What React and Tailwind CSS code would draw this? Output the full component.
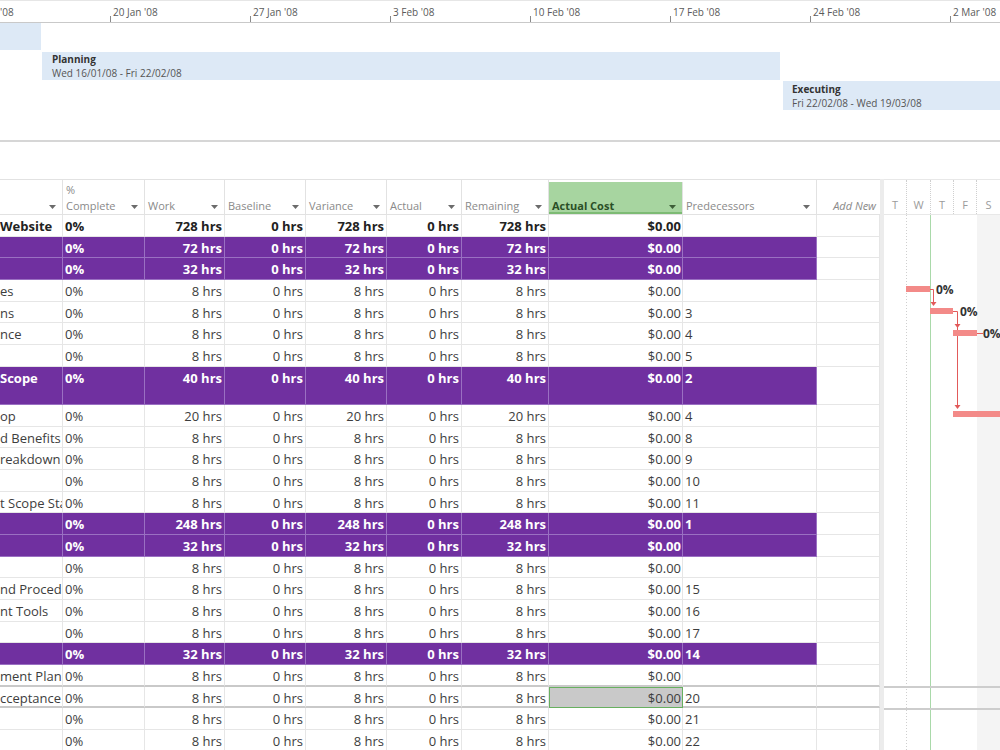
import React from "react";

const weeks = ["13 Jan '08", "20 Jan '08", "27 Jan '08", "3 Feb '08", "10 Feb '08", "17 Feb '08", "24 Feb '08", "2 Mar '08"];

const columns = [
  { label: "", w: "w-[63px]" },
  { label: "% Complete", w: "w-[82px]", twoLine: true },
  { label: "Work", w: "w-[80px]" },
  { label: "Baseline", w: "w-[81px]" },
  { label: "Variance", w: "w-[81px]" },
  { label: "Actual", w: "w-[75px]" },
  { label: "Remaining", w: "w-[87px]" },
  { label: "Actual Cost", w: "w-[134px]", active: true },
  { label: "Predecessors", w: "w-[134px]" },
];

// kind: top = project summary, group = purple summary task, task = plain task
const tasks = [
  { kind: "top", name: "Website", work: 728 },
  { kind: "group", name: "", work: 72 },
  { kind: "group", name: "", work: 32 },
  { kind: "task", name: "es", work: 8, pred: "" },
  { kind: "task", name: "ns", work: 8, pred: "3" },
  { kind: "task", name: "nce", work: 8, pred: "4" },
  { kind: "task", name: "", work: 8, pred: "5" },
  { kind: "group", name: " Scope", work: 40, pred: "2", tall: true },
  { kind: "task", name: "op", work: 20, pred: "4" },
  { kind: "task", name: "d Benefits", work: 8, pred: "8" },
  { kind: "task", name: "reakdown", work: 8, pred: "9" },
  { kind: "task", name: "", work: 8, pred: "10" },
  { kind: "task", name: "t Scope Sta", work: 8, pred: "11" },
  { kind: "group", name: "", work: 248, pred: "1" },
  { kind: "group", name: "", work: 32, pred: "" },
  { kind: "task", name: "", work: 8, pred: "" },
  { kind: "task", name: "nd Procedu", work: 8, pred: "15" },
  { kind: "task", name: "nt Tools", work: 8, pred: "16" },
  { kind: "task", name: "", work: 8, pred: "17" },
  { kind: "group", name: "", work: 32, pred: "14" },
  { kind: "task", name: "ment Plan", work: 8, pred: "", line: true },
  { kind: "task", name: "cceptance", work: 8, pred: "20", line: true, selected: true },
  { kind: "task", name: "", work: 8, pred: "21" },
  { kind: "task", name: "", work: 8, pred: "22" },
];

function Caret({ dark }) {
  return (
    <svg width="7" height="4" viewBox="0 0 7 4" className="flex-none mb-[5px]">
      <path d="M0 0h7L3.5 4z" fill={dark ? "#3d5e38" : "#6b6b6b"} />
    </svg>
  );
}

function Timeline() {
  return (
    <div className="h-[142px] border-t border-[#e6e6e6] border-b-2 border-b-[#d6d6d6]">
      <div className="h-[22px] border-b border-[#c9c9c9] overflow-hidden">
        <div className="flex items-end h-[21px]">
          <span className="w-[110px] flex-none text-[10px] leading-[13px] pb-[3px] text-[#5a5a5a]">'08</span>
          {weeks.slice(1).map((w) => (
            <div key={w} className="w-[140px] flex-none flex items-end h-[21px]">
              <div className="h-[6px] border-l border-[#8a8a8a]" />
              <span className="text-[10px] leading-[13px] pb-[3px] pl-[2px] text-[#5a5a5a] whitespace-nowrap">{w}</span>
            </div>
          ))}
        </div>
      </div>
      <div className="h-[27px] w-[41px] bg-[#dde9f6]" />
      <div className="mt-[2px] h-[28px] ml-[42px] w-[738px] bg-[#dde9f6] pl-[10px] text-[10px] leading-[14px]">
        <div className="font-bold text-[#333]">Planning</div>
        <div className="text-[#555]">Wed 16/01/08 - Fri 22/02/08</div>
      </div>
      <div className="mt-[1px] h-[29px] ml-[783px] bg-[#dde9f6] pl-[9px] pt-px text-[10px] leading-[14px]">
        <div className="font-bold text-[#333]">Executing</div>
        <div className="text-[#555]">Fri 22/02/08 - Wed 19/03/08</div>
      </div>
    </div>
  );
}

function HeaderRow() {
  return (
    <div className="flex h-[36px] border-t border-b border-[#e2e2e2] text-[11px] text-[#8a8a8a]">
      {columns.map((c, i) => (
        <div
          key={i}
          className={
            c.w +
            " flex-none flex items-end justify-between border-r border-[#e2e2e2] pl-[3px] pr-[6px] " +
            (c.active ? "bg-[#a7d5a0] mt-[2px] shadow-[inset_0_-2px_0_#7dbb74] font-bold text-[#2b4f27]" : "")
          }
        >
          {c.twoLine ? (
            <div className="leading-[16px]">
              <div>%</div>
              <div>Complete</div>
            </div>
          ) : (
            <span className="leading-[16px]">{c.label}</span>
          )}
          <Caret dark={c.active} />
        </div>
      ))}
      <div className="w-[63px] flex-none flex items-end justify-end pr-[4px] italic leading-[16px]">Add New</div>
    </div>
  );
}

function TaskRow({ t }) {
  const purple = t.kind === "group";
  const edge = t.line ? "border-b-2 border-b-[#c9c9c9]" : purple ? "border-b border-b-[#9a70c2]" : "border-b border-b-[#e6e6e6]";
  const cell =
    "flex-none h-full overflow-hidden whitespace-nowrap border-r " +
    edge +
    (purple ? " bg-[#7030a0] border-r-[#9a70c2] text-white font-bold" : " border-r-[#e6e6e6]") +
    (t.kind === "top" ? " font-bold text-[#222]" : "");
  const hrs = (n) => n + " hrs";
  return (
    <div className={"flex text-[13px] leading-[22px] " + (t.tall ? "h-[38px]" : "h-[21.7px]")}>
      <div className={cell + " w-[63px]"}>{t.name}</div>
      <div className={cell + " w-[82px] pl-[2px]"}>0%</div>
      <div className={cell + " w-[80px] text-right pr-[2px]"}>{hrs(t.work)}</div>
      <div className={cell + " w-[81px] text-right pr-[2px]"}>0 hrs</div>
      <div className={cell + " w-[81px] text-right pr-[2px]"}>{hrs(t.work)}</div>
      <div className={cell + " w-[75px] text-right pr-[2px]"}>0 hrs</div>
      <div className={cell + " w-[87px] text-right pr-[2px]"}>{hrs(t.work)}</div>
      <div
        className={
          cell +
          " w-[134px] text-right pr-px" +
          (t.selected ? " bg-[#c9c9c9] outline outline-1 -outline-offset-1 outline-[#68b060]" : "")
        }
      >
        $0.00
      </div>
      <div className={cell + " w-[134px] pl-[2px]"}>{t.pred}</div>
      <div className={"flex-none w-[63px] h-full border-r border-r-[#e6e6e6] " + (t.line ? "border-b-2 border-b-[#c9c9c9]" : "border-b border-b-[#e6e6e6]")} />
    </div>
  );
}

function Gantt() {
  const days = [
    { d: "T", w: "w-[22px]" },
    { d: "W", w: "w-[24px]" },
    { d: "T", w: "w-[23px]" },
    { d: "F", w: "w-[23px]" },
    { d: "S", w: "w-[24px]" },
  ];
  const bar = "#f38a88";
  const link = "#e25a5a";
  return (
    <div className="flex-1 flex flex-col">
      <div className="h-[36px] flex border-t border-b border-[#e8e8e8] text-[11px] text-[#9b9b9b]">
        {days.map((d, i) => (
          <div key={i} className={d.w + " flex-none flex items-end justify-center pb-px " + (i ? "border-l border-dotted border-[#cfcfcf]" : "")}>
            <span className="leading-[16px]">{d.d}</span>
          </div>
        ))}
      </div>
      <svg width="116" height="535" viewBox="0 0 116 535" className="block">
        <rect x="93" y="0" width="23" height="535" fill="#f4f4f4" />
        <line x1="22.5" y1="0" x2="22.5" y2="535" stroke="#cfcfcf" strokeDasharray="1 2" />
        <line x1="46.5" y1="0" x2="46.5" y2="535" stroke="#a9d9a9" />
        <rect x="0" y="471" width="116" height="2" fill="#cdcdcd" />
        <rect x="0" y="493" width="116" height="2" fill="#cdcdcd" />

        <rect x="22" y="71" width="24" height="6" fill={bar} />
        <path d="M46 74.5h3.5V88" stroke={link} fill="none" />
        <path d="M46.5 87h6l-3 4z" fill={link} />
        <text x="52" y="78.5" fontSize="12" fontWeight="700" fill="#333" fontFamily="Open Sans">0%</text>

        <rect x="46" y="93" width="23" height="6" fill={bar} />
        <path d="M69 96.5h4.5V190" stroke={link} fill="none" />
        <path d="M70.5 109h6l-3 4z" fill={link} />
        <text x="76" y="100.5" fontSize="12" fontWeight="700" fill="#333" fontFamily="Open Sans">0%</text>

        <rect x="69" y="115" width="24" height="6" fill={bar} />
        <line x1="93" y1="118.5" x2="99" y2="118.5" stroke={link} />
        <text x="99" y="122.5" fontSize="12" fontWeight="700" fill="#333" fontFamily="Open Sans">0%</text>

        <path d="M70.5 190h6l-3 4z" fill={link} />
        <rect x="69" y="196" width="47" height="6" fill={bar} />
      </svg>
    </div>
  );
}

export default function App() {
  return (
    <div className="w-[1000px] h-[750px] overflow-hidden bg-white font-['Open_Sans',sans-serif] text-[#3d3d3d]">
      <Timeline />
      <div className="h-[37px]" />
      <div className="flex">
        <div className="w-[880px] flex-none">
          <HeaderRow />
          {tasks.map((t, i) => (
            <TaskRow key={i} t={t} />
          ))}
        </div>
        <div className="w-[4px] flex-none bg-[#ececec]" />
        <Gantt />
      </div>
    </div>
  );
}
